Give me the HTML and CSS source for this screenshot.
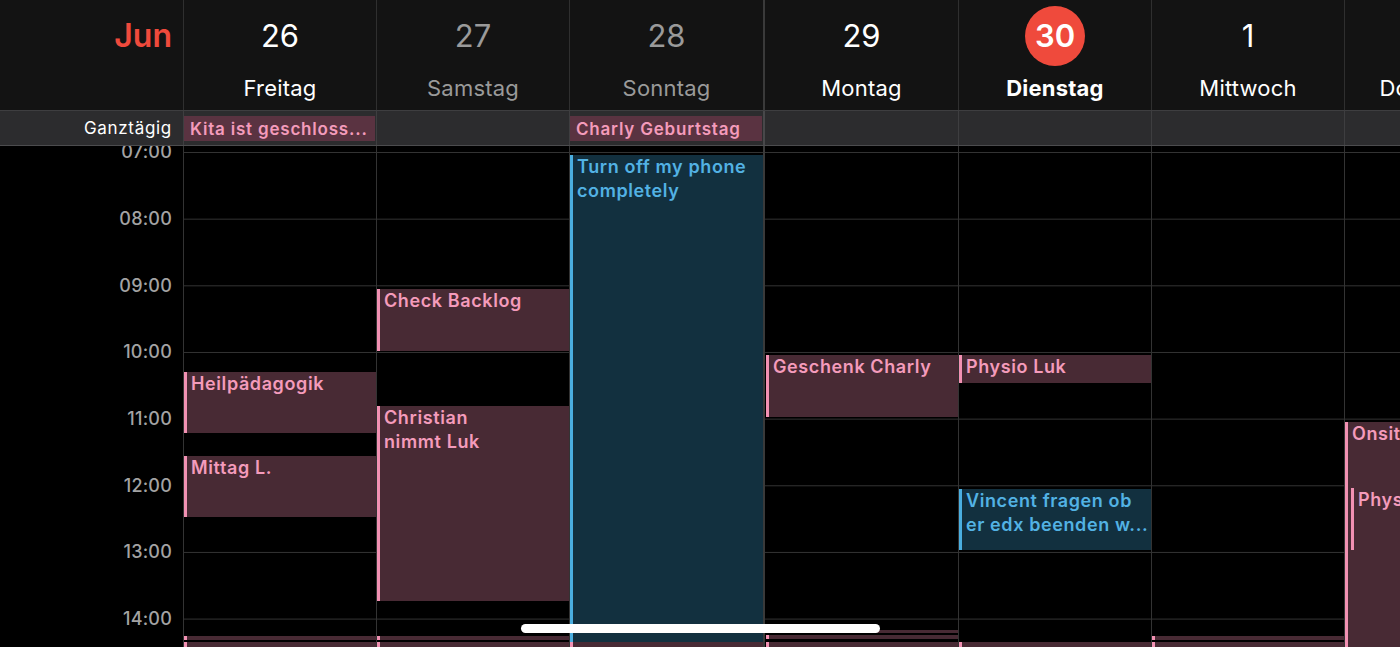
FILE: index.html
```html
<!DOCTYPE html>
<html>
<head>
  <title>Kalender - Woche</title>
  <link rel="stylesheet" href="styles.css">
</head>
<body>
  <div class="calendar">
    <div class="row header">
      <div class="gutter month">Jun</div>
      <div class="day"><span class="num">26</span><span class="name">Freitag</span></div>
      <div class="day weekend"><span class="num">27</span><span class="name">Samstag</span></div>
      <div class="day weekend"><span class="num">28</span><span class="name">Sonntag</span></div>
      <div class="day week-start"><span class="num">29</span><span class="name">Montag</span></div>
      <div class="day today"><span class="num">30</span><span class="name">Dienstag</span></div>
      <div class="day"><span class="num">1</span><span class="name">Mittwoch</span></div>
      <div class="day"><span class="num">2</span><span class="name">Donnerstag</span></div>
    </div>

    <div class="row allday">
      <div class="gutter allday-label">Ganztägig</div>
      <div class="slot"><div class="allday-event">Kita ist geschloss...</div></div>
      <div class="slot"></div>
      <div class="slot"><div class="allday-event">Charly Geburtstag</div></div>
      <div class="slot week-start"></div>
      <div class="slot"></div>
      <div class="slot"></div>
      <div class="slot"></div>
    </div>

    <div class="row grid">
      <div class="gutter hours">
        <div class="hour">07:00</div>
        <div class="hour">08:00</div>
        <div class="hour">09:00</div>
        <div class="hour">10:00</div>
        <div class="hour">11:00</div>
        <div class="hour">12:00</div>
        <div class="hour">13:00</div>
        <div class="hour">14:00</div>
        <div class="hour">15:00</div>
      </div>

      <!-- Freitag -->
      <div class="col">
        <div class="event" style="top: 226px; height: 61px;">Heilpädagogik</div>
        <div class="event" style="top: 310px; height: 61px;">Mittag L.</div>
        <div class="event" style="top: 490px; height: 4px;"></div>
        <div class="event" style="top: 496px; height: 10px;"></div>
      </div>

      <!-- Samstag -->
      <div class="col">
        <div class="event" style="top: 143px; height: 62px;">Check Backlog</div>
        <div class="event" style="top: 260px; height: 195px;">Christian<br>nimmt Luk</div>
        <div class="event" style="top: 490px; height: 4px;"></div>
        <div class="event" style="top: 496px; height: 10px;"></div>
      </div>

      <!-- Sonntag -->
      <div class="col">
        <div class="event blue" style="top: 9px; height: 500px;">Turn off my phone completely</div>
        <div class="event" style="top: 496px; height: 10px;"></div>
      </div>

      <!-- Montag -->
      <div class="col week-start">
        <div class="event inset" style="top: 209px; height: 62px;">Geschenk Charly</div>
        <div class="event inset" style="top: 484px; height: 3px;"></div>
        <div class="event inset" style="top: 489px; height: 4px;"></div>
        <div class="event inset" style="top: 496px; height: 10px;"></div>
      </div>

      <!-- Dienstag -->
      <div class="col">
        <div class="event" style="top: 209px; height: 28px;">Physio Luk</div>
        <div class="event blue" style="top: 343px; height: 61px;">
          <div class="line">Vincent fragen ob</div>
          <div class="line">er edx beenden w...</div>
        </div>
        <div class="event" style="top: 496px; height: 10px;"></div>
      </div>

      <!-- Mittwoch -->
      <div class="col">
        <div class="event" style="top: 490px; height: 4px;"></div>
        <div class="event" style="top: 496px; height: 10px;"></div>
      </div>

      <!-- Donnerstag -->
      <div class="col">
        <div class="event" style="top: 276px; height: 240px;">Onsite</div>
        <div class="event nested" style="top: 342px; height: 62px;">Physio</div>
      </div>
    </div>

    <div class="home-indicator"></div>
  </div>
</body>
</html>
```

FILE: styles.css
```css
* {
  box-sizing: border-box;
}

body {
  margin: 0;
  background-color: #000;
  font-family: Inter, "Noto Sans", sans-serif;
  color: #fff;
}

.calendar {
  position: relative;
  width: 1400px;
  height: 647px;
  overflow: hidden;
  background-color: #000;
}

.row {
  display: grid;
  grid-template-columns: 183px 193px 193px 194px 195px 193px 193px 193px;
}

.gutter {
  text-align: right;
  padding-right: 11px;
}

/* header */

.header {
  height: 110px;
  background-color: #131313;
}

.month {
  padding-top: 16px;
  font-size: 32px;
  font-weight: 600;
  color: #ef4a3c;
}

.day {
  display: flex;
  flex-direction: column;
  align-items: center;
  padding-top: 6px;
  border-left: 1px solid #2f2f2f;
  white-space: nowrap;
}

.day .num {
  width: 60px;
  height: 60px;
  line-height: 60px;
  text-align: center;
  font-size: 31px;
}

.day .name {
  margin-top: 10px;
  line-height: 24px;
  font-size: 22px;
  letter-spacing: 0.2px;
}

.weekend {
  color: #9a9a9a;
}

.today .num {
  border-radius: 50%;
  background-color: #ef4a3c;
  font-weight: 600;
}

.today .name {
  font-weight: 700;
}

.week-start {
  border-left: 2px solid #3a3a3a;
}

/* all-day row */

.allday {
  height: 36px;
  background-color: #2c2c2e;
  border-top: 1px solid #3e3e40;
  border-bottom: 1px solid #4c4c4e;
}

.allday-label {
  line-height: 34px;
  font-size: 17px;
  letter-spacing: 0.7px;
}

.slot {
  padding: 5px 1px 0 0;
  border-left: 1px solid #3e3e40;
}

.slot.week-start {
  border-left: 2px solid #48484a;
}

.allday-event {
  height: 25px;
  padding: 2px 0 0 6px;
  line-height: 23px;
  background-color: #5a3341;
  color: #f49bbb;
  font-size: 17px;
  font-weight: 600;
  letter-spacing: 0.8px;
  white-space: nowrap;
  overflow: hidden;
}

/* time grid */

.grid {
  height: 501px;
  overflow: hidden;
}

.hours {
  margin-top: -27.6px;
}

.hour {
  height: 66.67px;
  display: flex;
  align-items: center;
  justify-content: flex-end;
  color: #a3a3a3;
  font-size: 18px;
  font-weight: 500;
  letter-spacing: 0.2px;
}

.col {
  position: relative;
  border-left: 1px solid #333;
  background-image: linear-gradient(#333 0 1px, transparent 1px);
  background-size: 100% 66.67px;
  background-position: 0 6px;
}

.col.week-start {
  border-left: 2px solid #3a3a3a;
}

.event {
  position: absolute;
  left: 0;
  right: 0;
  padding: 0 4px;
  overflow: hidden;
  background-color: #482a34;
  border-left: 3px solid #f291b3;
  color: #f49bbb;
  font-size: 18px;
  font-weight: 600;
  letter-spacing: 0.6px;
  line-height: 24px;
}

.event.inset {
  left: 1px;
}

.event.nested {
  left: 6px;
}

.event.blue {
  background-color: #12303f;
  border-left-color: #4aaee0;
  color: #52b2e4;
}

.event .line {
  white-space: nowrap;
}

.home-indicator {
  position: absolute;
  left: 521px;
  top: 624px;
  width: 359px;
  height: 9px;
  border-radius: 5px;
  background-color: #fff;
}
```
